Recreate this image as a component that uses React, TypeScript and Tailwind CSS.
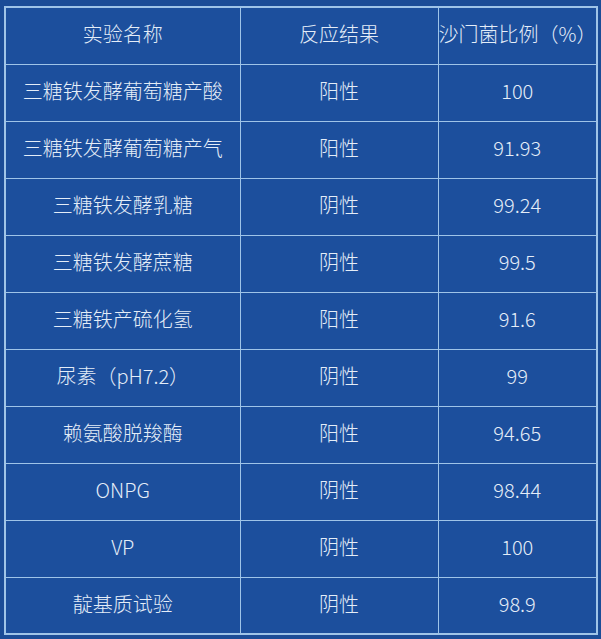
const rows: [string, string, string][] = [
  ["三糖铁发酵葡萄糖产酸", "阳性", "100"],
  ["三糖铁发酵葡萄糖产气", "阳性", "91.93"],
  ["三糖铁发酵乳糖", "阴性", "99.24"],
  ["三糖铁发酵蔗糖", "阴性", "99.5"],
  ["三糖铁产硫化氢", "阳性", "91.6"],
  ["尿素（pH7.2）", "阴性", "99"],
  ["赖氨酸脱羧酶", "阳性", "94.65"],
  ["ONPG", "阴性", "98.44"],
  ["VP", "阴性", "100"],
  ["靛基质试验", "阴性", "98.9"],
];

export default function App() {
  return (
    <div
      className="w-[601px] h-[639px] bg-[#1b4c97] pt-[6px] pl-[4px]"
      style={{ fontFamily: '"Noto Sans CJK SC", "Noto Sans", sans-serif' }}
    >
      <table className="border-collapse border-2 border-[#9fc4e8] bg-[#1c4f9d] text-[#e4edf8] text-[20px] font-light table-fixed">
        <colgroup>
          <col className="w-[235px]" />
          <col className="w-[198px]" />
          <col className="w-[159px]" />
        </colgroup>
        <thead>
          <tr className="h-[57px]">
            <th className="font-light border border-[#9fc4e8] pb-[3px]">实验名称</th>
            <th className="font-light border border-[#9fc4e8] pb-[3px]">反应结果</th>
            <th className="font-light border border-[#9fc4e8] pb-[3px]">沙门菌比例（%）</th>
          </tr>
        </thead>
        <tbody>
          {rows.map(([name, result, pct]) => (
            <tr key={name} className="h-[57px]">
              <td className="text-center border border-[#9fc4e8] pb-[3px]">{name}</td>
              <td className="text-center border border-[#9fc4e8] pb-[3px]">{result}</td>
              <td className="text-center border border-[#9fc4e8] pb-[3px]">{pct}</td>
            </tr>
          ))}
        </tbody>
      </table>
    </div>
  );
}
